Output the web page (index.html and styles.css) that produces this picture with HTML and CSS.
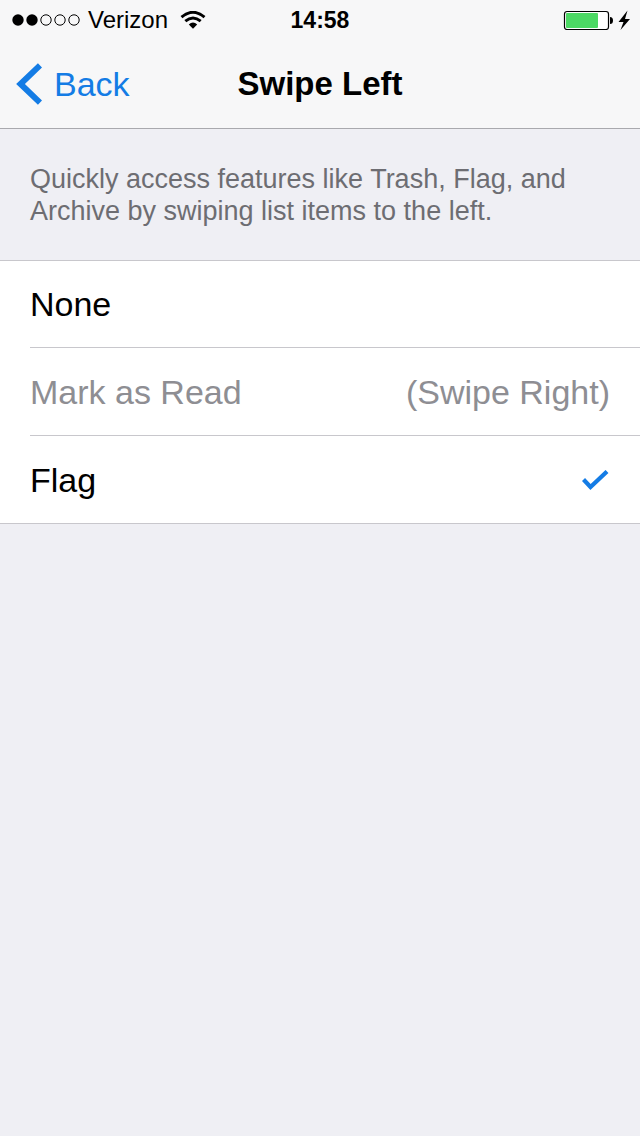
FILE: index.html
```html
<!DOCTYPE html>
<html lang="en">
<head>
<meta charset="utf-8">
<meta name="viewport" content="width=device-width, initial-scale=1">
<title>Swipe Left</title>
<link rel="stylesheet" href="styles.css">
</head>
<body>
<header class="header">
  <div class="status">
    <div class="status-left">
      <svg class="signal" width="68" height="12" viewBox="0 0 68 12" aria-hidden="true">
        <circle cx="6" cy="6" r="5.7"/><circle cx="20" cy="6" r="5.7"/>
        <g fill="none" stroke="#000" stroke-width="1"><circle cx="34" cy="6" r="5.2"/><circle cx="48" cy="6" r="5.2"/><circle cx="62" cy="6" r="5.2"/></g>
      </svg>
      <span class="carrier">Verizon</span>
      <svg class="wifi" width="26" height="18" viewBox="0 0 26 18" aria-hidden="true">
        <path d="M1.500 6.200Q13-3.700 24.500 6.200M5.300 10.200Q13 3.700 20.700 10.200" fill="none" stroke="#000" stroke-width="2.900"/>
        <path d="M8.800 13.400Q13 9.800 17.200 13.400L13 17.800Z"/>
      </svg>
    </div>
    <time class="clock">14:58</time>
    <div class="status-right">
      <svg width="68" height="20" viewBox="0 0 68 20" aria-hidden="true">
        <rect x="1.500" y="1.500" width="44" height="18" rx="2.500" fill="#fff" stroke="#000" stroke-width="1.200"/>
        <rect x="3" y="3" width="32" height="15" rx="1" fill="#4cd964"/>
        <path d="M47 7Q50 7 50 10.500T47 14Z"/>
        <path d="M64.500 0.500L55.500 12H60.500L57.500 20L67 9H62Z"/>
      </svg>
    </div>
  </div>
  <nav class="nav">
    <button class="back" type="button">
      <svg width="26" height="42" viewBox="0 0 26 42" aria-hidden="true"><path d="M24 2.300L4.500 21L24 39.700" fill="none" stroke="#147ce5" stroke-width="6"/></svg>
      <span>Back</span>
    </button>
    <h1 class="title">Swipe Left</h1>
  </nav>
</header>
<main>
  <p class="hint">Quickly access features like Trash, Flag, and Archive by swiping list items to the left.</p>
  <div class="options" role="radiogroup" aria-label="Swipe Left">
    <label class="option"><input class="radio" type="radio" name="action"><span>None</span></label>
    <label class="option option-disabled"><input class="radio" type="radio" name="action" disabled><span>Mark as Read</span><span>(Swipe Right)</span></label>
    <label class="option"><input class="radio" type="radio" name="action" checked><span>Flag</span>
      <svg class="check" width="28" height="20" viewBox="0 0 28 20" aria-hidden="true"><path d="M1.500 9.500L8.500 17L25 1.500" fill="none" stroke="#147ce5" stroke-width="4.200"/></svg>
    </label>
  </div>
</main>
</body>
</html>
```
FILE: styles.css
```css
* {
  box-sizing: border-box;
}

body {
  margin: 0;
  min-height: 100vh;
  background: #efeff4;
  color: #000;
  font-family: "Liberation Sans", Arial, sans-serif;
}

.header {
  background: #f7f7f8;
  border-bottom: 1px solid #a9a9ae;
}

.status,
.nav {
  display: grid;
  grid-template-columns: 1fr auto 1fr;
  align-items: center;
}

.status {
  height: 40px;
  padding: 0 9px;
  font-size: 24px;
  line-height: 40px;
}

.status-left {
  display: flex;
  align-items: center;
  gap: 8px;
  padding-left: 3px;
}

.wifi {
  margin-left: 4px;
}

.clock {
  font-weight: bold;
  font-size: 23px;
}

.status-right {
  display: flex;
  justify-content: flex-end;
}

.nav {
  height: 88px;
  padding: 0 16px;
}

.back {
  display: flex;
  align-items: center;
  gap: 12px;
  justify-self: start;
  padding: 0;
  border: 0;
  background: none;
  color: #147ce5;
  font: inherit;
  font-size: 34px;
}

.title {
  margin: 0;
  font-size: 33px;
  line-height: 40px;
}

.hint {
  margin: 0;
  padding: 34px 30px 33px;
  color: #6d6d72;
  font-size: 27px;
  line-height: 32px;
}

.options {
  padding-left: 30px;
  background: #fff;
  border-top: 1px solid #c8c7cc;
  border-bottom: 1px solid #c8c7cc;
}

.option {
  display: flex;
  align-items: center;
  justify-content: space-between;
  min-height: 86px;
  padding-right: 30px;
  font-size: 34px;
  line-height: 40px;
}

.option + .option {
  min-height: 88px;
  border-top: 1px solid #c8c7cc;
}

.option-disabled {
  color: #8e8e93;
}

.radio {
  position: absolute;
  opacity: 0;
}

.check {
  visibility: hidden;
}

.radio:checked ~ .check {
  visibility: visible;
}
```
